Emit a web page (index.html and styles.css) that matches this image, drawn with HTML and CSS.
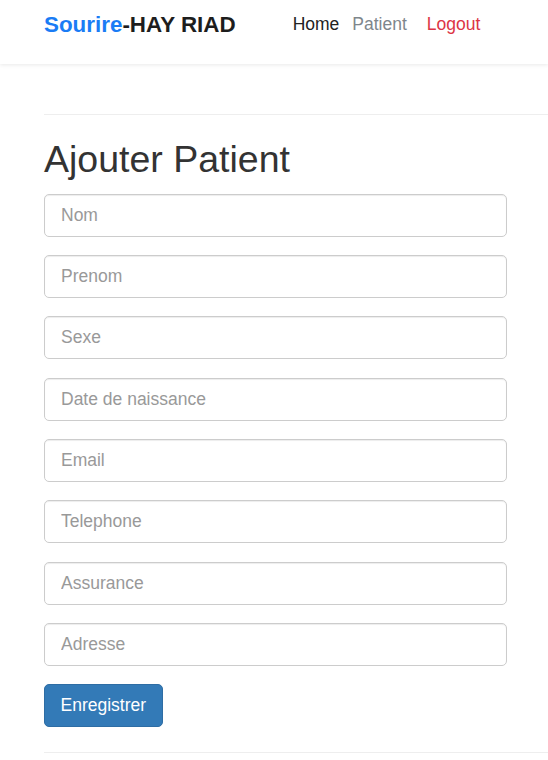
FILE: index.html
```html
<!DOCTYPE html>
<html lang="fr">
<head>
<meta charset="utf-8">
<title>Ajouter Patient</title>
<link rel="stylesheet" href="styles.css">
</head>
<body>
<nav class="navbar">
  <a class="brand" href="#"><span class="brand-blue">Sourire</span>-HAY RIAD</a>
  <ul class="nav">
    <li><a class="nav-home" href="#">Home</a></li>
    <li><a class="nav-patient" href="#">Patient</a></li>
    <li><a class="nav-logout" href="#">Logout</a></li>
  </ul>
</nav>
<main class="container">
  <hr class="rule">
  <h1 class="title">Ajouter Patient</h1>
  <form class="form">
    <input class="field" type="text" placeholder="Nom">
    <input class="field" type="text" placeholder="Prenom">
    <input class="field" type="text" placeholder="Sexe">
    <input class="field" type="text" placeholder="Date de naissance">
    <input class="field" type="text" placeholder="Email">
    <input class="field" type="text" placeholder="Telephone">
    <input class="field" type="text" placeholder="Assurance">
    <input class="field" type="text" placeholder="Adresse">
    <div><button class="btn" type="button">Enregistrer</button></div>
  </form>
  <hr class="rule rule-bottom">
</main>
</body>
</html>
```
FILE: styles.css
```css
* { box-sizing: border-box; }
html, body { margin: 0; padding: 0; }
body {
  font-family: "Liberation Sans", Arial, sans-serif;
  color: #333;
  background: #fff;
  overflow-x: hidden;
}
.navbar {
  height: 64px;
  display: flex;
  align-items: flex-start;
  padding-left: 44px;
  box-shadow: 0 1px 4px rgba(0,0,0,0.09);
  position: relative;
}
.brand {
  margin-top: 12px;
  font-size: 22.4px;
  font-weight: bold;
  color: #1d1d1d;
  text-decoration: none;
  line-height: normal;
}
.brand-blue { color: #1a7cf5; }
.nav {
  list-style: none;
  margin: 14px 0 0 57px;
  padding: 0;
  display: flex;
  font-size: 17.5px;
  line-height: normal;
}
.nav a { text-decoration: none; }
.nav-home { color: #222; margin-right: 13px; }
.nav-patient { color: #7e868c; margin-right: 20px; }
.nav-logout { color: #dc3545; }
.container {
  padding-left: 44px;
}
.rule {
  border: 0;
  border-top: 1px solid #eee;
  margin: 50px 0 0 0;
  height: 0;
}
.title {
  font-size: 37.5px;
  font-weight: normal;
  line-height: 1.1;
  margin: 24px 0 13.6px 0;
  color: #333;
}
.form {
  width: 463px;
  display: flex;
  flex-direction: column;
  gap: 18.3px;
}
.field {
  display: block;
  width: 100%;
  height: 43px;
  padding: 0 16px;
  font-family: "Liberation Sans", Arial, sans-serif;
  font-size: 17.5px;
  color: #555;
  border: 1px solid #ccc;
  border-radius: 5px;
  background: #fff;
  box-shadow: inset 0 1px 1px rgba(0,0,0,0.075);
  outline: none;
}
.field::placeholder { color: #999; }
.btn {
  height: 43px;
  padding: 0 15.5px;
  font-family: "Liberation Sans", Arial, sans-serif;
  font-size: 17.5px;
  color: #fff;
  background: #337ab7;
  border: 1px solid #2e6da4;
  border-radius: 5px;
}
.rule-bottom { margin-top: 25px; }
```
